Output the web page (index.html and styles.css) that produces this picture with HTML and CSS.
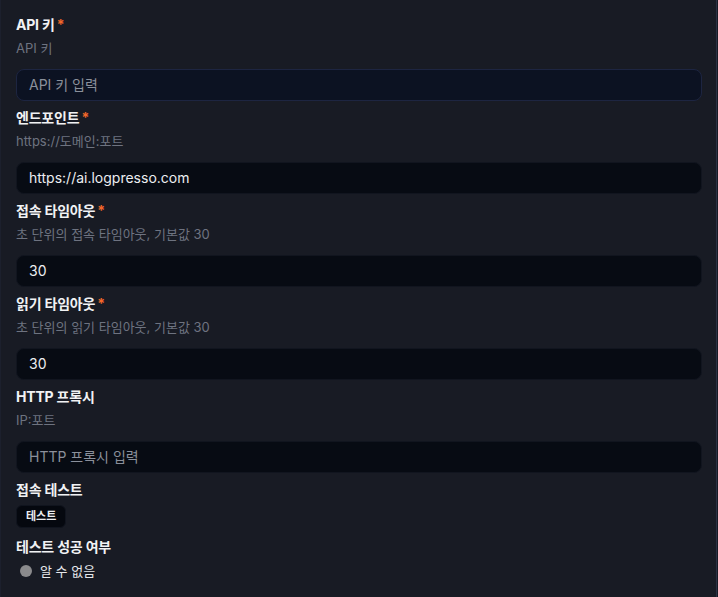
FILE: index.html
```html
<!DOCTYPE html>
<html lang="ko">
<head>
<meta charset="utf-8">
<link rel="stylesheet" href="styles.css">
</head>
<body>
<div class="panel">
  <div class="field">
    <div class="label">API 키<span class="req">*</span></div>
    <div class="desc">API 키</div>
    <div class="input focus placeholder">API 키 입력</div>
  </div>
  <div class="field">
    <div class="label">엔드포인트<span class="req">*</span></div>
    <div class="desc">https://도메인:포트</div>
    <div class="input">https://ai.logpresso.com</div>
  </div>
  <div class="field">
    <div class="label">접속 타임아웃<span class="req">*</span></div>
    <div class="desc">초 단위의 접속 타임아웃, 기본값 30</div>
    <div class="input">30</div>
  </div>
  <div class="field">
    <div class="label">읽기 타임아웃<span class="req">*</span></div>
    <div class="desc">초 단위의 읽기 타임아웃, 기본값 30</div>
    <div class="input">30</div>
  </div>
  <div class="field">
    <div class="label">HTTP 프록시</div>
    <div class="desc">IP:포트</div>
    <div class="input placeholder">HTTP 프록시 입력</div>
  </div>
  <div class="field">
    <div class="label">접속 테스트</div>
    <div class="btn-row"><button class="btn">테스트</button></div>
  </div>
  <div class="field">
    <div class="label">테스트 성공 여부</div>
    <div class="status"><span class="dot"></span><span>알 수 없음</span></div>
  </div>
</div>
</body>
</html>
```
FILE: styles.css
```css
html, body {
  margin: 0;
  padding: 0;
  background: #181b24;
}
body {
  width: 718px;
  height: 597px;
  overflow: hidden;
  font-family: Inter, "Noto Sans CJK KR", sans-serif;
}
.panel {
  box-sizing: border-box;
  width: 717px;
  height: 597px;
  padding: 15px 14px 0 15px;
  border-left: 1px solid #1c202d;
  border-right: 1px solid #2a3245;
  display: flex;
  flex-direction: column;
  gap: 7px;
}
.field {
  display: flex;
  flex-direction: column;
}
.label {
  font-size: 14px;
  font-weight: 700;
  line-height: 20px;
  color: #f1f2f4;
  letter-spacing: -0.2px;
}
.req {
  color: #f2672a;
  margin-left: 2px;
}
.desc {
  margin-top: 3px;
  font-size: 13px;
  line-height: 20px;
  color: #6e7380;
}
.input {
  box-sizing: border-box;
  margin-top: 11px;
  height: 32px;
  border-radius: 8px;
  background: #070b13;
  border: 1px solid #11151f;
  padding: 0 12px;
  font-size: 14px;
  line-height: 30px;
  color: #eceef1;
}
.input.focus {
  background: #0c1222;
  border-color: #1d2541;
}
.input.placeholder {
  color: #8b909b;
}
.btn-row {
  margin-top: 5px;
  display: flex;
}
.btn {
  height: 23px;
  padding: 0 9px;
  border-radius: 6px;
  border: 1px solid #10141e;
  background: #05080f;
  color: #eceef1;
  font-family: Inter, "Noto Sans CJK KR", sans-serif;
  font-size: 11px;
  font-weight: 700;
  line-height: 21px;
}
.field:last-child {
  margin-top: 2px;
}
.status {
  margin-top: 4px;
  display: flex;
  align-items: center;
  gap: 8px;
  padding-left: 4px;
  font-size: 13px;
  line-height: 20px;
  color: #e6e8eb;
}
.dot {
  width: 12px;
  height: 12px;
  border-radius: 50%;
  background: #8a8a8c;
}
```
